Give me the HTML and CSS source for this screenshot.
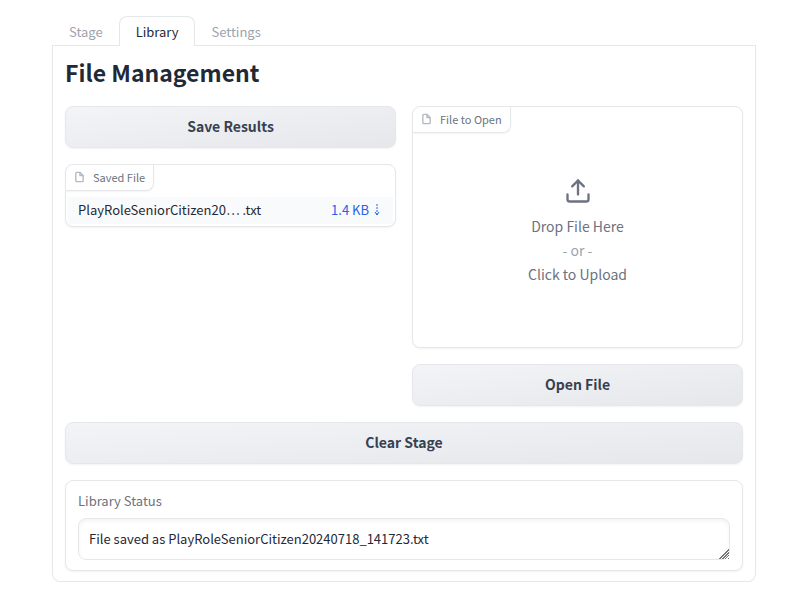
FILE: index.html
```html
<!DOCTYPE html>
<html lang="en">
<head>
<meta charset="utf-8">
<meta name="viewport" content="width=device-width, initial-scale=1">
<title>File Management</title>
<link rel="stylesheet" href="styles.css">
</head>
<body>
<main class="app">
  <nav class="tabs" role="tablist">
    <button class="tab" role="tab" type="button">Stage</button>
    <button class="tab tab-selected" role="tab" type="button" aria-selected="true">Library</button>
    <button class="tab" role="tab" type="button">Settings</button>
  </nav>
  <section class="panel" role="tabpanel">
    <h1 class="title">File Management</h1>
    <div class="columns">
      <div class="stack">
        <button class="button" type="button">Save Results</button>
        <div class="block">
          <div class="block-label">
            <svg class="file-icon" viewBox="0 0 24 24" aria-hidden="true"><path d="M13 2H6a2 2 0 0 0-2 2v16a2 2 0 0 0 2 2h12a2 2 0 0 0 2-2V9z"/><path d="M13 2v7h7"/></svg>
            <span>Saved File</span>
          </div>
          <table class="files">
            <tbody>
              <tr>
                <td class="file-name">PlayRoleSeniorCitizen20… .txt</td>
                <td class="file-size"><a class="download" href="#">1.4 KB <svg class="arrow-icon" viewBox="0 0 6 12" aria-hidden="true"><path class="arrow-shaft" d="M3 0v11"/><path d="M1 8l2 3 2-3"/></svg></a></td>
              </tr>
            </tbody>
          </table>
        </div>
      </div>
      <div class="stack">
        <div class="block upload-block">
          <div class="block-label">
            <svg class="file-icon" viewBox="0 0 24 24" aria-hidden="true"><path d="M13 2H6a2 2 0 0 0-2 2v16a2 2 0 0 0 2 2h12a2 2 0 0 0 2-2V9z"/><path d="M13 2v7h7"/></svg>
            <span>File to Open</span>
          </div>
          <button class="dropzone" type="button">
            <svg class="upload-icon" viewBox="0 0 24 24" aria-hidden="true"><path d="M21 15v4a2 2 0 0 1-2 2H5a2 2 0 0 1-2-2v-4"/><path d="M17 8l-5-5-5 5"/><path d="M12 3v12"/></svg>
            <span>Drop File Here</span>
            <span class="or">- or -</span>
            <span>Click to Upload</span>
          </button>
        </div>
        <button class="button" type="button">Open File</button>
      </div>
    </div>
    <button class="button" type="button">Clear Stage</button>
    <div class="block status">
      <label class="status-label" for="status">Library Status</label>
      <textarea class="status-text" id="status" rows="1" readonly>File saved as PlayRoleSeniorCitizen20240718_141723.txt</textarea>
    </div>
  </section>
</main>
</body>
</html>
```
FILE: styles.css
```css
:root {
  --line: #e5e7eb;
  --muted: #6b7280;
  --faint: #9ca3af;
  --ink: #1f2937;
  --shadow: 0 1px 2px rgba(0, 0, 0, 0.05);
}

* {
  box-sizing: border-box;
}

body {
  margin: 0;
  background: #fff;
  color: var(--ink);
  font-family: "Source Sans Pro", "Noto Sans CJK SC", sans-serif;
  font-size: 13px;
  line-height: 20px;
}

button,
textarea {
  font: inherit;
}

.app {
  padding: 16px 52px;
}

.tabs {
  display: flex;
  border-bottom: 1px solid var(--line);
}

.tab {
  margin-bottom: -1px;
  padding: 5px 15px 4px 16px;
  border: 1px solid transparent;
  border-bottom: 0;
  border-radius: 8px 8px 0 0;
  background: none;
  color: var(--faint);
}

.tab-selected {
  border-color: var(--line);
  background: #fff;
  color: var(--ink);
}

.panel {
  display: flex;
  flex-direction: column;
  gap: 16px;
  padding: 12px;
  padding-bottom: 10px;
  border: 1px solid var(--line);
  border-top: 0;
  border-radius: 0 0 8px 8px;
}

.title {
  margin: 0 0 4px;
  font-size: 23px;
  font-weight: 600;
  line-height: 28px;
}

.columns {
  display: grid;
  grid-template-columns: repeat(2, minmax(0, 1fr));
  gap: 16px;
}

.stack {
  display: flex;
  flex-direction: column;
  gap: 16px;
}

.button {
  padding: 7px 16px 9px;
  border: 1px solid var(--line);
  border-radius: 8px;
  background: linear-gradient(to bottom right, #f3f4f6, #e5e7eb);
  box-shadow: var(--shadow);
  color: #374151;
  font-size: 14px;
  font-weight: 600;
  line-height: 24px;
}

.block {
  overflow: hidden;
  border: 1px solid var(--line);
  border-radius: 8px;
  background: #fff;
  box-shadow: var(--shadow);
}

.block-label {
  display: flex;
  align-items: center;
  gap: 8px;
  width: fit-content;
  height: 26px;
  padding: 0 8px 2px;
  border-right: 1px solid var(--line);
  border-bottom: 1px solid var(--line);
  border-radius: 0 0 8px 0;
  box-shadow: var(--shadow);
  color: var(--muted);
  font-size: 11px;
}

.file-icon {
  width: 11px;
  height: 12px;
  fill: none;
  stroke: #b4b8c0;
  stroke-width: 3;
}

.files {
  width: calc(100% - 4px);
  margin: 6px 2px 2px;
  border-collapse: collapse;
  background: #f9fafb;
}

.files td {
  padding: 2px 10px 4px;
  line-height: 21px;
}

.files .file-size {
  padding-right: 13px;
  text-align: right;
}

.download {
  display: inline-flex;
  align-items: center;
  gap: 5px;
  color: #2563eb;
  text-decoration: none;
}

.arrow-icon {
  width: 6px;
  height: 12px;
  fill: none;
  stroke: currentColor;
}

.arrow-shaft {
  stroke-dasharray: 2 1;
}

.upload-block {
  display: flex;
  flex-direction: column;
  height: 242px;
}

.dropzone {
  display: flex;
  flex: 1;
  flex-direction: column;
  align-items: center;
  padding: 44px 0 0;
  border: 0;
  background: none;
  color: var(--muted);
  font-size: 14px;
  line-height: 24px;
}

.upload-icon {
  width: 28px;
  height: 28px;
  margin-bottom: 9px;
  fill: none;
  stroke: currentColor;
  stroke-width: 2;
  stroke-linecap: round;
  stroke-linejoin: round;
}

.or {
  color: var(--faint);
}

.status {
  display: flex;
  flex-direction: column;
  gap: 7px;
  padding: 10px 12px;
}

.status-label {
  color: var(--muted);
}

.status-text {
  width: 100%;
  height: 42px;
  padding: 10px;
  border: 1px solid var(--line);
  border-radius: 8px;
  box-shadow: inset 0 2px 4px rgba(0, 0, 0, 0.05);
  color: var(--ink);
  resize: vertical;
}

.status-text::-webkit-resizer {
  background:
    linear-gradient(135deg, #fff 60%, transparent 60%),
    repeating-linear-gradient(135deg, #777 0 1px, #fff 1px 2px);
}
```
